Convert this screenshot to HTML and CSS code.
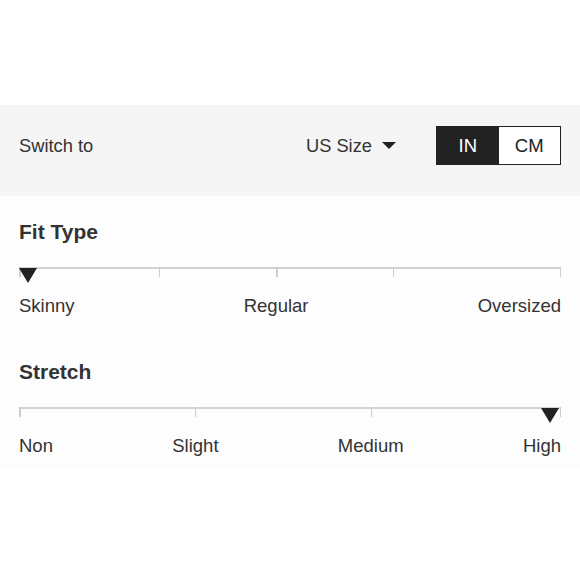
FILE: index.html
```html
<!DOCTYPE html>
<html>
<head>
<meta charset="utf-8">
<link rel="stylesheet" href="styles.css">
</head>
<body>
<div class="spacer"></div>
<div class="switch-bar">
  <span class="switch-label">Switch to</span>
  <div class="switch-right">
    <span class="size-select">US Size <span class="caret"></span></span>
    <div class="toggle">
      <span class="toggle-opt active">IN</span>
      <span class="toggle-opt">CM</span>
    </div>
  </div>
</div>
<div class="fit-panel">
  <div class="attr">
    <h3 class="attr-title">Fit Type</h3>
    <div class="scale">
      <div class="scale-line"></div>
      <span class="tick" style="left:0%"></span>
      <span class="tick" style="left:25.83%"></span>
      <span class="tick" style="left:47.42%"></span>
      <span class="tick" style="left:69.0%"></span>
      <span class="tick" style="left:calc(100% - 1.5px)"></span>
      <span class="marker" style="left:0"></span>
    </div>
    <div class="labels">
      <span>Skinny</span><span>Regular</span><span>Oversized</span>
    </div>
  </div>
  <div class="attr attr-second">
    <h3 class="attr-title">Stretch</h3>
    <div class="scale">
      <div class="scale-line"></div>
      <span class="tick" style="left:0%"></span>
      <span class="tick" style="left:32.47%"></span>
      <span class="tick" style="left:64.94%"></span>
      <span class="tick" style="left:calc(100% - 1.5px)"></span>
      <span class="marker" style="left:calc(100% - 20px)"></span>
    </div>
    <div class="labels">
      <span>Non</span><span>Slight</span><span>Medium</span><span>High</span>
    </div>
  </div>
</div>
</body>
</html>
```
FILE: styles.css
```css
html, body {
  margin: 0;
  padding: 0;
  background: #ffffff;
}
body {
  font-family: "Liberation Sans", Arial, Helvetica, sans-serif;
  color: #333333;
  width: 580px;
}
.spacer {
  height: 105px;
}
.switch-bar {
  background: #f5f5f5;
  padding: 21px 19px 31px 19px;
  display: flex;
  align-items: center;
  justify-content: space-between;
}
.switch-label {
  font-size: 18.3px;
  line-height: 22px;
}
.switch-right {
  display: flex;
  align-items: center;
  gap: 40px;
}
.size-select {
  font-size: 18.3px;
  line-height: 22px;
  display: flex;
  align-items: center;
  gap: 10px;
}
.caret {
  width: 0;
  height: 0;
  border-left: 7px solid transparent;
  border-right: 7px solid transparent;
  border-top: 7px solid #222222;
}
.toggle {
  display: flex;
  width: 125px;
  height: 39px;
  box-sizing: border-box;
  border: 1.5px solid #222222;
  background: #ffffff;
}
.toggle-opt {
  flex: 1;
  display: flex;
  align-items: center;
  justify-content: center;
  font-size: 18.5px;
  color: #222222;
}
.toggle-opt.active {
  background: #222222;
  color: #ffffff;
}
.fit-panel {
  background: #fdfdfd;
  padding: 24px 19px 12px 19px;
}
.attr-second {
  margin-top: 43px;
}
.attr-title {
  margin: 0 0 23px 0;
  font-size: 21px;
  line-height: 24px;
  font-weight: bold;
  color: #333333;
}
.scale {
  position: relative;
  height: 28px;
}
.scale-line {
  height: 2px;
  background: #d2d2d2;
}
.tick {
  position: absolute;
  top: 0;
  width: 1.5px;
  height: 10px;
  background: #cccccc;
}
.marker {
  position: absolute;
  top: 1px;
  width: 0;
  height: 0;
  border-left: 9px solid transparent;
  border-right: 9px solid transparent;
  border-top: 15px solid #222222;
}
.labels {
  display: flex;
  justify-content: space-between;
  font-size: 18.5px;
  line-height: 22px;
  color: #333333;
}
```
